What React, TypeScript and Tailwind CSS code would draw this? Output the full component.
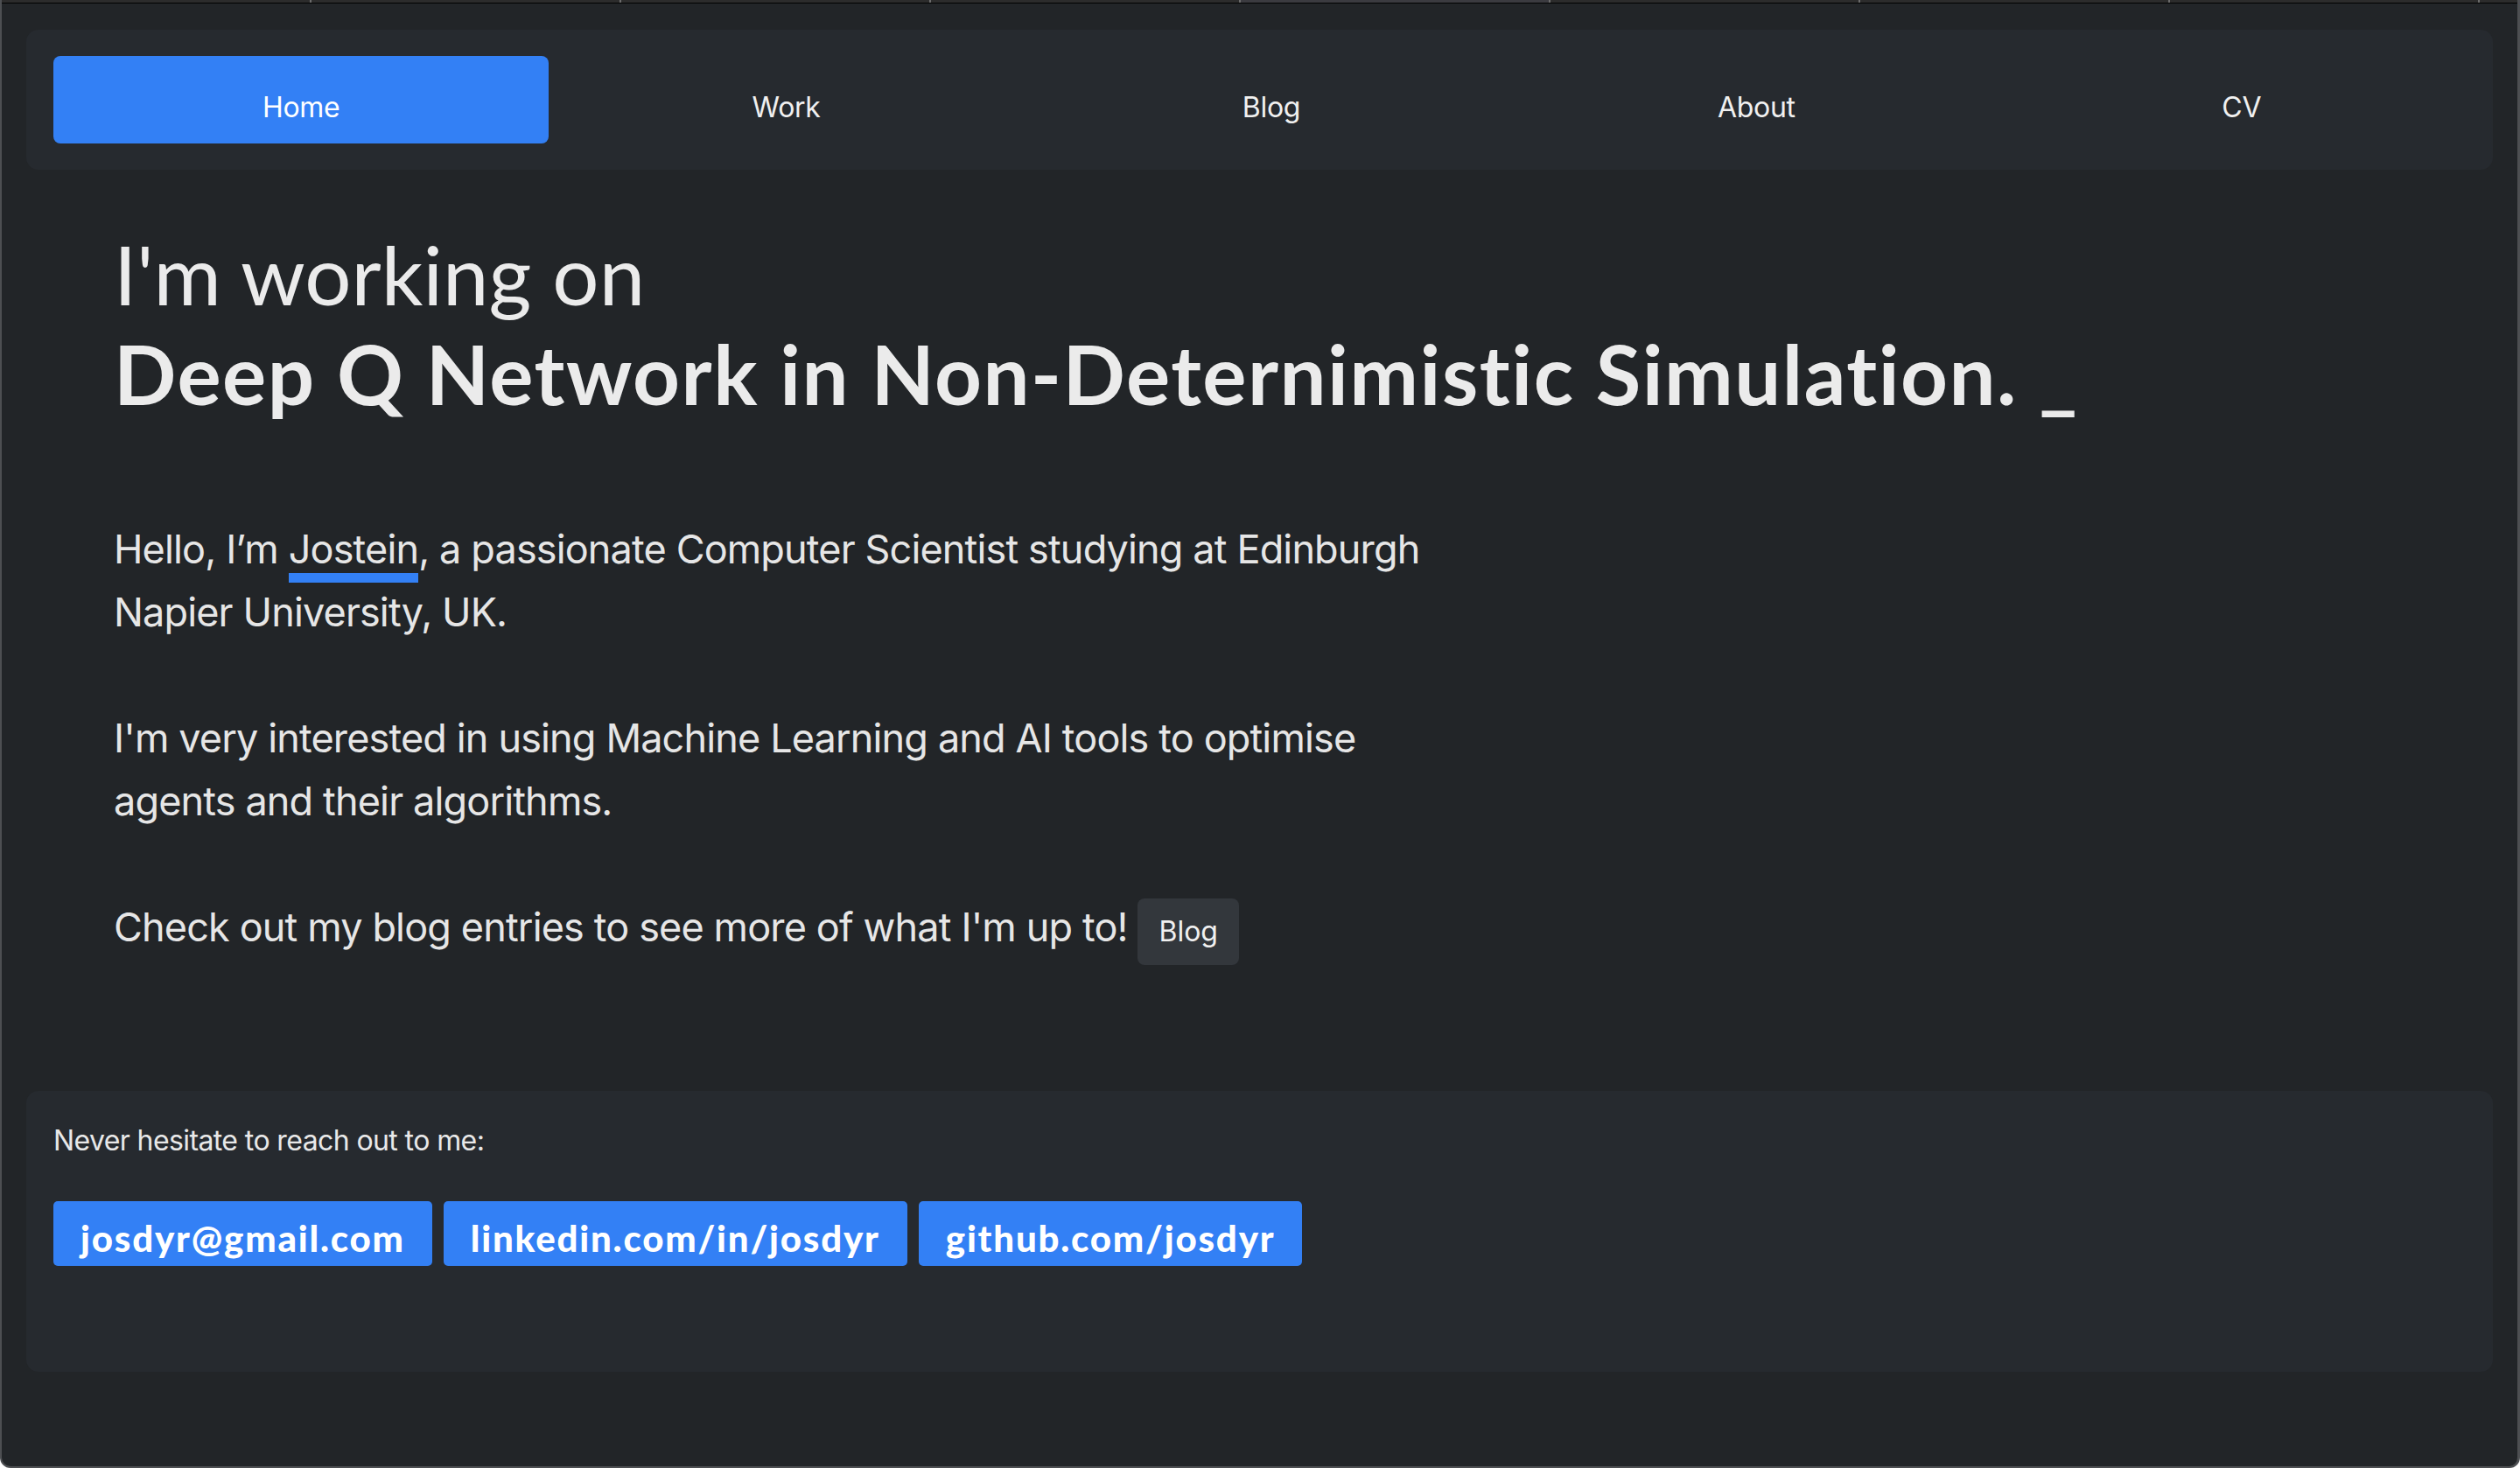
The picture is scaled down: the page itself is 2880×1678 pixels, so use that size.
const tabs = [0, 1, 2, 3, 4, 5, 6, 7];

const navItems = ["Home", "Work", "Blog", "About", "CV"];

const contacts = ["josdyr@gmail.com", "linkedin.com/in/josdyr", "github.com/josdyr"];

export default function App() {
    return (
        <div className="w-full h-[1678px] flex flex-col bg-[#222528] border-l-2 border-r-[3px] border-b-2 border-[#4d4f52] rounded-b-[12px] overflow-hidden font-['Inter',sans-serif]">

            {/* tab strip of the browser window */}
            <div className="flex h-[4px] bg-[#2c2c2c] border-b border-black shrink-0">
                {tabs.map((t) => (
                    <div
                        key={t}
                        className={`w-[354px] h-full border-r-2 border-[#6b6b6b] ${t === 4 ? "bg-[#3b3b40]" : ""}`}
                    />
                ))}
            </div>

            <div className="flex flex-col px-[28px] pt-[30px]">

                {/* Navigation */}
                <nav className="bg-[#262a2f] rounded-[14px] pl-[37px] pr-[10px] py-[30px]">
                    <ul className="grid grid-cols-5 items-center">
                        {navItems.map((item, i) => (
                            <li key={item} className="flex justify-center">
                                {i === 0 ? (
                                    <a className="w-[566px] shrink-0 h-[100px] pt-[18px] flex items-center justify-center bg-[#3380f5] rounded-[8px] text-white text-[32px] tracking-[-0.3px]">
                                        {item}
                                    </a>
                                ) : (
                                    <a className="h-[100px] pt-[18px] flex items-center text-[#f0f0f0] text-[32px] tracking-[-0.3px]">{item}</a>
                                )}
                            </li>
                        ))}
                    </ul>
                </nav>

                {/* Intro */}
                <section className="pl-[100px] pt-[62px]">
                    <h1 className="font-['Lato',sans-serif] text-[94px] leading-[114px] text-[#ebebeb]">
                        <span className="font-normal">I'm working on</span>
                        <br />
                        <span className="font-bold tracking-[1.5px]">
                            Deep Q Network in Non-Deternimistic Simulation. _
                        </span>
                    </h1>

                    <div className="mt-[108px] w-[1540px] text-[45px] leading-[72px] text-[#e6e6e6] tracking-[-0.85px] flex flex-col gap-[72px]">
                        <p>
                            Hello, I’m <span className="border-b-[11px] border-[#3380f5]">Jostein</span>, a passionate Computer
                            Scientist studying at Edinburgh Napier University, UK.
                        </p>
                        <p>I'm very interested in using Machine Learning and AI tools to optimise agents and their algorithms.</p>
                        <p>
                            Check out my blog entries to see more of what I'm up to!{" "}
                            <a className="inline-block bg-[#33373c] rounded-[8px] px-[24px] py-[18px] text-[32px] leading-[40px] text-[#f0f0f0] tracking-normal">
                                Blog
                            </a>
                        </p>
                    </div>
                </section>

                {/* Contact */}
                <footer className="mt-[144px] bg-[#262a2f] rounded-[14px] px-[31px] pt-[37px] pb-[121px]">
                    <p className="text-[32px] leading-[40px] text-[#e8e8e8] tracking-[-0.6px]">Never hesitate to reach out to me:</p>
                    <div className="mt-[49px] flex gap-[13px]">
                        {contacts.map((c) => (
                            <a
                                key={c}
                                className="h-[74px] bg-[#3380f5] rounded-[5px] px-[31px] pt-[18px] font-['Lato',sans-serif] font-black text-[42px] leading-[48px] tracking-[1.8px] text-white"
                            >
                                {c}
                            </a>
                        ))}
                    </div>
                </footer>
            </div>
        </div>
    );
}
